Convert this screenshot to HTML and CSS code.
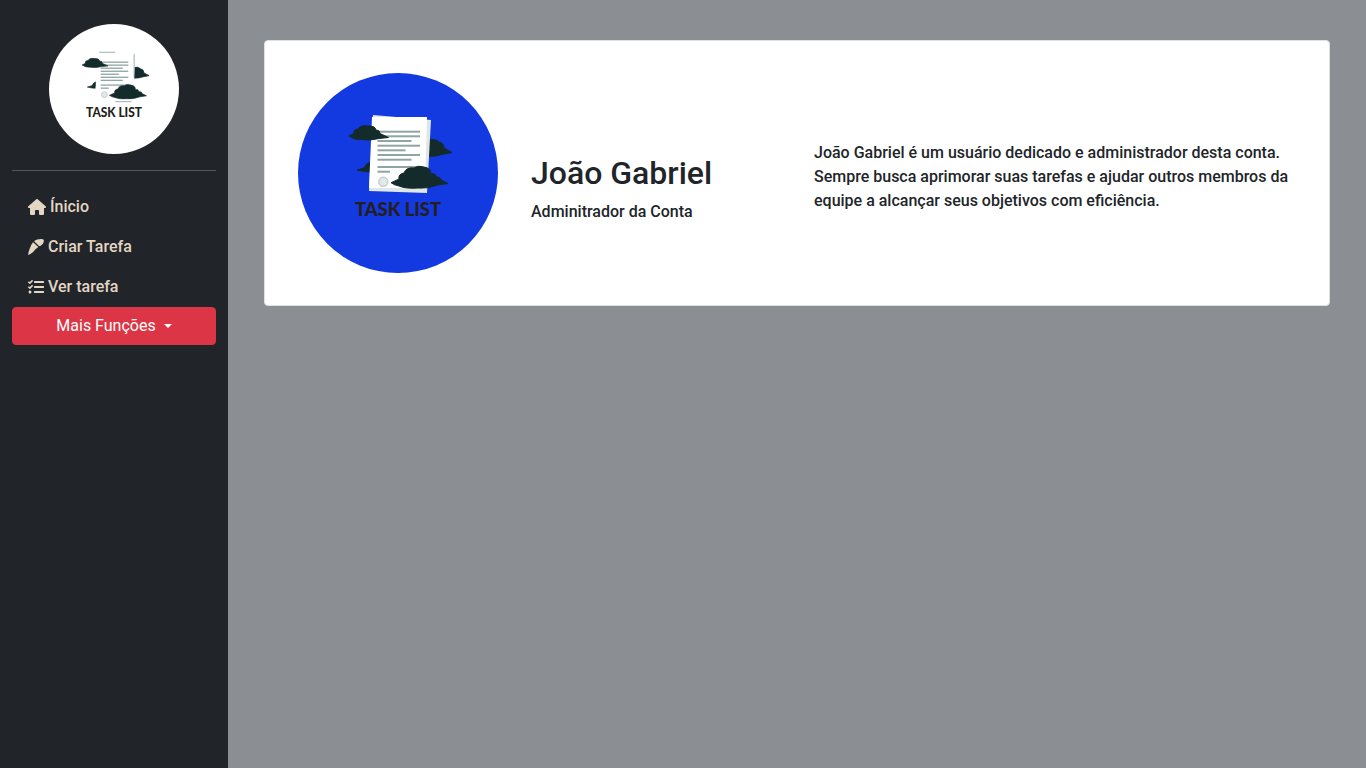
FILE: index.html
```html
<!DOCTYPE html>
<html lang="en">
<head>
    <meta charset="UTF-8">
    <meta name="viewport" content="width=device-width, initial-scale=1.0">
    <title>Task List</title>
    <link rel="stylesheet" href="styles.css">
</head>
<body>

    <!-- Shared logo drawing -->
    <svg class="logo-defs" width="0" height="0" aria-hidden="true">
        <symbol id="task-logo" viewBox="0 0 200 200">
            <path class="cloud" d="M130 67 Q137 65 141 69 Q146 70 146 75 L154 79.5 L146 81 Q138 83.5 130 83.5Z"/>
            <path class="cloud" d="M59 97 L66 95 Q68 90 74 88 L74 99 Q66 99 59 97Z"/>
            <polygon class="paper-back" points="75,42 133,47 129,120 71,118"/>
            <polygon class="paper" points="74,44 129,44 127,115 71,115"/>
            <g class="paper-lines">
                <rect x="79.5" y="57.7" width="42.5" height="2"/>
                <rect x="79.5" y="62.3" width="42.5" height="2"/>
                <rect x="79.5" y="67" width="34" height="2"/>
                <rect x="79.5" y="71.7" width="42.5" height="2"/>
                <rect x="79.5" y="76.3" width="28" height="2"/>
                <rect x="79.5" y="81" width="42.5" height="2"/>
                <rect x="79.5" y="85.7" width="34" height="2"/>
                <rect x="79.5" y="93" width="42.5" height="2"/>
                <rect x="79.5" y="97.7" width="12.5" height="2"/>
            </g>
            <circle class="paper-seal" cx="85.3" cy="108.7" r="4.5"/>
            <path class="cloud" d="M51 63 L56 60.5 Q55 56.5 60 56 Q63 51.5 70 53 Q77 52.5 78 57 Q82 57 82 60.5 L90.5 64.5 L81 65.5 Q72 68 64 66.5 Q56 67 51 63Z"/>
            <path class="cloud" d="M93 109.7 L101 106 Q100 101 106 100 Q108 94 116 95 Q120 92 126 94 Q133 95 133 101 Q138 100 138 104 Q143 104 143 107 L150 110.5 L140 112 Q130 116 120 115 Q108 116 101 113 Q96 112 93 109.7Z"/>
        </symbol>
    </svg>

    <!-- Sidebar -->
    <aside class="sidebar">
        <div class="sidebar-logo">
            <svg class="logo-small" viewBox="0 0 200 200">
                <use href="#task-logo"/>
                <path class="paper-edge" d="M131 46V83M77 43.5H102M102 119.5H127"/>
                <text class="logo-text" x="100" y="143" text-anchor="middle" textLength="86" lengthAdjust="spacingAndGlyphs">TASK LIST</text>
            </svg>
        </div>
        <hr class="divider">
        <nav class="nav-links">
            <a href="#">
                <svg class="icon icon-wide" viewBox="0 0 576 512"><path d="M575.8 255.5c0 18-15 32.1-32 32.1h-32l.7 160.2c0 2.7-.2 5.4-.5 8.1V472c0 22.1-17.9 40-40 40H456c-1.1 0-2.2 0-3.3-.1c-1.4 .1-2.8 .1-4.2 .1H416 392c-22.1 0-40-17.9-40-40V448 384c0-17.7-14.3-32-32-32H256c-17.7 0-32 14.3-32 32v64 24c0 22.1-17.9 40-40 40H160 128.1c-1.5 0-3-.1-4.5-.2c-1.2 .1-2.4 .2-3.6 .2H104c-22.1 0-40-17.9-40-40V360c0-.9 0-1.9 .1-2.8V287.6H32c-18 0-32-14-32-32.1c0-9 3-17 10-24L266.4 8c7-7 15-8 22-8s15 2 21 7L564.8 231.5c8 7 12 15 11 24z"/></svg>
                Ínicio
            </a>
            <a href="#">
                <svg class="icon" viewBox="0 0 512 512"><path d="M4 508C8 440 30 350 100 200Q120 150 165 100L330 255Q280 300 230 335C170 420 80 490 4 508ZM195 70C260 15 370-10 470 5C510 15 512 55 500 100C480 165 420 205 360 230Z"/></svg>
                Criar Tarefa
            </a>
            <a href="#">
                <svg class="icon" viewBox="0 0 512 512"><path d="M139.61 35.5a12 12 0 0 0-17 0L58.93 98.81l-22.7-22.12a12 12 0 0 0-17 0L3.53 92.41a12 12 0 0 0 0 17l47.59 47.4a12.78 12.78 0 0 0 17.61 0l15.59-15.62L156.52 69a12.09 12.09 0 0 0 .09-17zm0 159.19a12 12 0 0 0-17 0l-63.68 63.72-22.7-22.1a12 12 0 0 0-17 0L3.53 252a12 12 0 0 0 0 17L51 316.5a12.77 12.77 0 0 0 17.6 0l15.7-15.69 72.2-72.22a12 12 0 0 0 .09-16.9zM64 368c-26.49 0-48.59 21.5-48.59 48S37.53 464 64 464a48 48 0 0 0 0-96zm432 16H208a16 16 0 0 0-16 16v32a16 16 0 0 0 16 16h288a16 16 0 0 0 16-16v-32a16 16 0 0 0-16-16zm0-320H208a16 16 0 0 0-16 16v32a16 16 0 0 0 16 16h288a16 16 0 0 0 16-16V80a16 16 0 0 0-16-16zm0 160H208a16 16 0 0 0-16 16v32a16 16 0 0 0 16 16h288a16 16 0 0 0 16-16v-32a16 16 0 0 0-16-16z"/></svg>
                Ver tarefa
            </a>
        </nav>
        <button class="more-btn" type="button">Mais Funções<span class="caret"></span></button>
    </aside>

    <!-- Profile -->
    <main class="content">
        <section class="profile-card">
            <div class="profile-photo">
                <svg class="logo-large" viewBox="0 0 200 200">
                    <use href="#task-logo"/>
                    <text class="logo-text" x="100" y="143" text-anchor="middle" textLength="86" lengthAdjust="spacingAndGlyphs">TASK LIST</text>
                </svg>
            </div>
            <div class="profile-name">
                <h2>João Gabriel</h2>
                <p>Adminitrador da Conta</p>
            </div>
            <p class="profile-bio">João Gabriel é um usuário dedicado e administrador desta conta. Sempre busca aprimorar suas tarefas e ajudar outros membros da equipe a alcançar seus objetivos com eficiência.</p>
        </section>
    </main>

</body>
</html>
```

FILE: styles.css
```css
* {
    box-sizing: border-box;
}

body {
    font-family: Roboto, "Liberation Sans", sans-serif;
    font-size: 16px;
    line-height: 24px;
    margin: 0;
    height: 100vh;
    display: flex;
    color: #212529;
    background-color: #8b8e92;
    overflow: hidden;
}

.logo-defs {
    position: absolute;
}

/* Logo parts */
.cloud {
    fill: #142b2c;
    stroke: #142b2c;
    stroke-width: 1;
    stroke-linejoin: round;
}

.paper {
    fill: #fff;
}

.paper-back {
    fill: var(--paper-back);
}

.paper-lines {
    fill: #8ea5a3;
}

.paper-seal {
    fill: #e3e9e8;
    stroke: #c5d0cf;
    stroke-width: 1.5;
}

.paper-edge {
    fill: none;
    stroke: #7f9896;
    stroke-width: 1.2;
}

.logo-text {
    font-family: Lato, "Open Sans", sans-serif;
    font-weight: 900;
    font-size: 19px;
    fill: #231f20;
}

/* Sidebar */
.sidebar {
    width: 228px;
    flex-shrink: 0;
    padding: 24px 12px 0;
    background-color: #212529;
}

.sidebar-logo {
    width: 130px;
    height: 130px;
    margin: 0 auto;
    border-radius: 50%;
    background-color: #fff;
}

.logo-small {
    --paper-back: #fff;
    display: block;
    width: 130px;
    height: 130px;
}

.divider {
    margin: 16px 0;
    border: 0;
    border-top: 1px solid #54585c;
}

.nav-links a {
    display: flex;
    align-items: center;
    gap: 4px;
    height: 40px;
    padding: 0 16px;
    color: #e3d6c3;
    font-weight: 500;
    text-decoration: none;
}

.icon {
    width: 16px;
    height: 16px;
    fill: currentColor;
}

.icon-wide {
    width: 18px;
}

.more-btn {
    display: block;
    width: 100%;
    height: 38px;
    padding: 0;
    font: inherit;
    color: #fff;
    background-color: #dc3545;
    border: 1px solid #dc3545;
    border-radius: 4px;
    cursor: pointer;
}

.caret {
    display: inline-block;
    margin-left: 8px;
    vertical-align: 3px;
    border-top: 4.8px solid;
    border-left: 4.8px solid transparent;
    border-right: 4.8px solid transparent;
}

/* Main content */
.content {
    flex: 1;
    padding: 40px 36px;
}

.profile-card {
    display: flex;
    height: 266px;
    padding: 32px 33px;
    background-color: #fff;
    border: 1px solid #dfe0e1;
    border-radius: 4px;
}

.profile-photo {
    width: 200px;
    height: 200px;
    flex-shrink: 0;
    margin-right: 33px;
    border-radius: 50%;
    background-color: #1339e0;
}

.logo-large {
    --paper-back: #dfe7e6;
    display: block;
    width: 200px;
    height: 200px;
}

.profile-name {
    width: 283px;
    flex-shrink: 0;
    padding-top: 81px;
    font-weight: 500;
}

.profile-name h2 {
    margin: 0 0 8px;
    font-size: 32px;
    font-weight: 500;
    line-height: 38px;
}

.profile-name p {
    margin: 0;
}

.profile-bio {
    margin: 68px 0 0;
    font-weight: 500;
}
```
